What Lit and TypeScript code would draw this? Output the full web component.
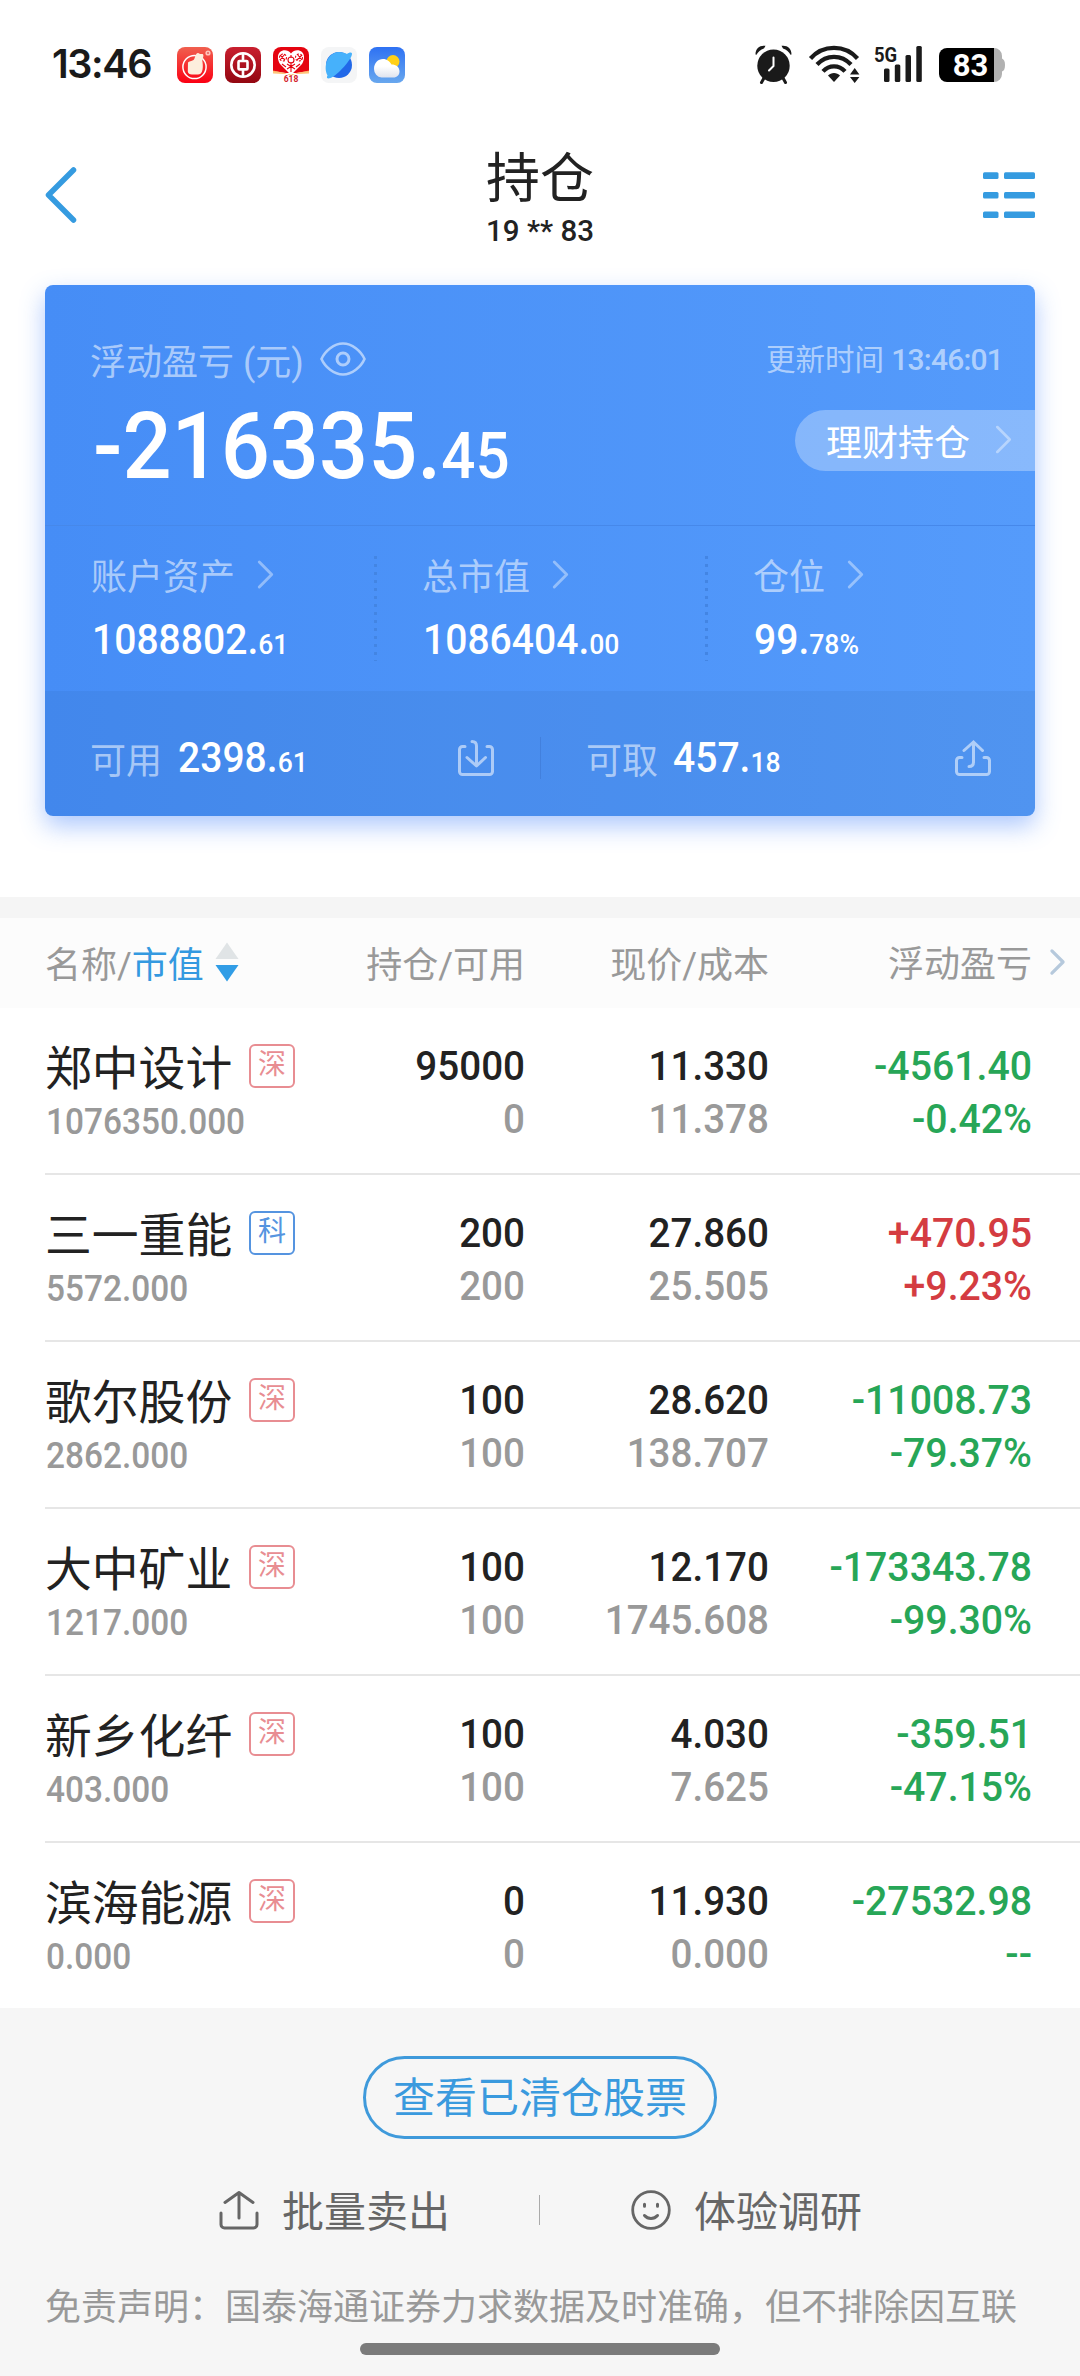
import { LitElement, html, css, svg } from "lit";
import { customElement, property } from "lit/decorators.js";
import { classMap } from "lit/directives/class-map.js";

interface Holding {
  name: string;
  tag: string;
  value: string;
  held: string;
  available: string;
  price: string;
  cost: string;
  profit: string;
  rate: string;
  up?: boolean;
}

const HOLDINGS: Holding[] = [
  { name: "郑中设计", tag: "深", value: "1076350.000", held: "95000", available: "0", price: "11.330", cost: "11.378", profit: "-4561.40", rate: "-0.42%" },
  { name: "三一重能", tag: "科", value: "5572.000", held: "200", available: "200", price: "27.860", cost: "25.505", profit: "+470.95", rate: "+9.23%", up: true },
  { name: "歌尔股份", tag: "深", value: "2862.000", held: "100", available: "100", price: "28.620", cost: "138.707", profit: "-11008.73", rate: "-79.37%" },
  { name: "大中矿业", tag: "深", value: "1217.000", held: "100", available: "100", price: "12.170", cost: "1745.608", profit: "-173343.78", rate: "-99.30%" },
  { name: "新乡化纤", tag: "深", value: "403.000", held: "100", available: "100", price: "4.030", cost: "7.625", profit: "-359.51", rate: "-47.15%" },
  { name: "滨海能源", tag: "深", value: "0.000", held: "0", available: "0", price: "11.930", cost: "0.000", profit: "-27532.98", rate: "--" },
];

const base = css`
  * { box-sizing: border-box; }
  :host { display: block; font-family: Roboto, "Noto Sans CJK SC", sans-serif; }
  svg { display: block; flex: none; overflow: visible; }
  .row { display: flex; align-items: center; }
`;

const chevron = (w: number, h: number, sw: number) => html`
  <svg width=${w} height=${h} viewBox="0 0 16 28" fill="none" stroke="currentColor" stroke-width=${sw} stroke-linecap="round" stroke-linejoin="round">
    <path d="M2 2 14 14 2 26" />
  </svg>`;

@customElement("status-bar")
class StatusBar extends LitElement {
  static styles = [base, css`
    :host { height: 128px; padding: 45px 75px 0 52px; }
    .bar { display: flex; height: 39px; align-items: flex-start; color: #1a1a1a; }
    .time { width: 125px; font: 600 39.500px/39px Inter, sans-serif; letter-spacing: -1.400px; }
    .apps { display: flex; gap: 12px; padding-top: 2px; }
    .grow { flex: 1; }
    .wifi { margin-left: 17px; }
    .signal { position: relative; margin-left: 13px; width: 48px; height: 39px; }
    .net { position: absolute; left: 0; top: -1px; font-size: 21px; line-height: 22px; font-weight: 700; transform: scaleX(.88); transform-origin: left; }
    .battery { position: relative; margin-left: 17px; margin-top: 3px; width: 66px; height: 34px; }
    .level { position: absolute; left: 0; top: 0; width: 63px; text-align: center; font-size: 31px; line-height: 35px; font-weight: 700; color: #fff; }
    text { font-family: Roboto, sans-serif; font-weight: 700; }
  `];

  render() {
    return html`
      <div class="bar">
        <div class="time">13:46</div>
        <div class="apps">
          <svg width="36" height="36" viewBox="0 0 36 36">
            <defs><linearGradient id="a" x2="0" y2="1"><stop offset="0" stop-color="#f0604f" /><stop offset="1" stop-color="#fb0013" /></linearGradient></defs>
            <rect width="36" height="36" rx="8" fill="url(#a)" />
            <circle cx="17.500" cy="20" r="11.600" fill="none" stroke="#fff" stroke-width="1.500" />
            <path d="M11 15.500c1-1.500 3.500-1 5.500-2.500 2-2 1.500-6.500 4.500-7 1.500 0 1.300 1.500 3.500 1 2.500-.5 2 2 1.500 4-.4 1.500-1 2.500-.5 4 .500 3 .500 7-.5 9.500-.7 2-2 3-4 3h-6c-2.500 0-4-1-4.200-3z" fill="#fdeedd" />
            <circle cx="31" cy="6" r="2.600" fill="#ffc4bb" /><circle cx="31" cy="6" r="1" fill="#e5605a" />
          </svg>
          <svg width="36" height="36" viewBox="0 0 36 36">
            <defs><linearGradient id="b" x2="0" y2="1"><stop offset="0" stop-color="#c91f2f" /><stop offset="1" stop-color="#930711" /></linearGradient></defs>
            <rect width="36" height="36" rx="8" fill="url(#b)" />
            <circle cx="18" cy="18" r="11.700" fill="none" stroke="#fff" stroke-width="2.600" />
            <rect x="13.500" y="14" width="9" height="8.400" rx="1" fill="none" stroke="#fff" stroke-width="2.600" />
            <path d="M18 6v8M18 22v8" stroke="#fff" stroke-width="2.600" />
          </svg>
          <svg width="36" height="36" viewBox="0 0 36 36">
            <path d="M8 0h20a8 8 0 0 1 8 8v16L23 26H13L0 24V8a8 8 0 0 1 8-8z" fill="#e50410" />
            <path d="M0 23.500 12 26l6 3 6-3 12-2.500v3L26 27H10L0 26.500z" fill="#ffb65a" opacity=".8" />
            <path d="M18 6.500C15 2.500 10 2.500 7 5c-3 3-2.500 8 0 12l11 11 11-11c2.500-4 3-9 0-12-3-2.500-8-2.500-11 1.500z" fill="#fff" />
            <g stroke="#e50410" stroke-width="1.100" fill="none">
              <path d="M7 8l5 5M12 7l-5 6M24 7l5 6M29 8l-5 5M9 17l4 3M27 17l-4 3M18 8v3M18 15v10M14 22l8-5M14 17l8 5" />
              <circle cx="18" cy="13" r="3" /><circle cx="10" cy="10.500" r="3.500" stroke-dasharray="2 1.500" /><circle cx="26" cy="10.500" r="3.500" stroke-dasharray="2 1.500" />
            </g>
            <text x="18" y="35" text-anchor="middle" font-size="8.500" fill="#d3222b">618</text>
          </svg>
          <svg width="36" height="36" viewBox="0 0 36 36">
            <rect width="36" height="36" rx="8" fill="#f4f5f6" />
            <circle cx="18" cy="18" r="13" fill="#2168e8" />
            <path d="M6.500 28.500C2 20 6 5.500 18 5c4 0 6 1 8 2 2-1.500 4.500-2 5-.5.6 5-15 22.500-21.500 24.500-3 1-4.500 0-3-2.500z" fill="#46b1fb" />
          </svg>
          <svg width="36" height="36" viewBox="0 0 36 36">
            <defs><linearGradient id="w" x2="0" y2="1"><stop offset="0" stop-color="#2e71f3" /><stop offset="1" stop-color="#68a7ee" /></linearGradient>
            <linearGradient id="c" x2="0" y2="1"><stop offset=".4" stop-color="#fff" /><stop offset="1" stop-color="#dfe3ee" /></linearGradient></defs>
            <rect width="36" height="36" rx="8" fill="url(#w)" />
            <circle cx="24" cy="14.500" r="6.500" fill="#ffd019" />
            <path d="M12.500 30.500a8.500 8.500 0 0 1-7.500-8.500c0-6 4-10 9-10 4 0 7 2.500 8.500 5.500 4.500 0 8 2.500 8 7 0 3.500-2.500 6-6 6z" fill="url(#c)" />
          </svg>
        </div>
        <div class="grow"></div>
        <svg width="37" height="39" viewBox="0 0 37 39">
          <circle cx="18.500" cy="20.700" r="16.200" fill="#1a1a1a" />
          <path d="M.5 9.500C.5 3 5 0 10.500.8L9 3.500C5.500 4.500 3 7 1.500 9.800zM36.500 9.500C36.500 3 32 0 26.500.8L28 3.500c3.500 1 6 3.500 7.500 6.300z" fill="#1a1a1a" />
          <path d="M9 33l-2.500 4.500M28 33l2.500 4.500" stroke="#1a1a1a" stroke-width="3" stroke-linecap="round" />
          <path d="M18.500 12.500v8.500l-4.500 4.500" stroke="#fff" stroke-width="2" fill="none" stroke-linecap="round" stroke-linejoin="round" />
        </svg>
        <svg class="wifi" width="52" height="39" viewBox="0 0 52 39">
          <g fill="none" stroke="#1a1a1a" stroke-width="4.200">
            <path d="M1.500 13.500C14-.7 36-.7 48.500 13.500" />
            <path d="M8 19.500c9.500-10.300 24.500-10.300 34 0" />
            <path d="M14 26.300c6-6.600 16-6.600 22 0" />
          </g>
          <path d="M19 30.500c3-3.500 9-3.500 12 0L25 37z" fill="#1a1a1a" />
          <path d="M41 29.500l4.700-6.500 4.700 6.500zM41 32h9.400l-4.700 6z" fill="#1a1a1a" />
        </svg>
        <div class="signal">
          <svg width="48" height="39" viewBox="0 0 48 39" fill="#1a1a1a">
            <rect x="10" y="23.500" width="5.500" height="13.500" rx="1.500" /><rect x="20.800" y="19.500" width="5.500" height="17.500" rx="1.500" /><rect x="31.500" y="10" width="5.500" height="27" rx="1.500" /><rect x="42.300" y="1" width="5.500" height="36" rx="1.500" />
          </svg>
          <span class="net">5G</span>
        </div>
        <div class="battery">
          <svg width="66" height="34" viewBox="0 0 66 34">
            <path d="M50 0h5a8 8 0 0 1 8 8v2.500c2 1 3 2.500 3 6.500s-1 5.500-3 6.500V26a8 8 0 0 1-8 8h-5z" fill="#b1b1b1" />
            <path d="M8 0h47v34H8a8 8 0 0 1-8-8V8a8 8 0 0 1 8-8z" fill="#000" />
          </svg>
          <span class="level">83</span>
        </div>
      </div>`;
  }
}

@customElement("nav-header")
class NavHeader extends LitElement {
  static styles = [base, css`
    :host { height: 157px; padding: 0 45px; }
    .nav { display: grid; grid-template-columns: 52px 1fr 52px; color: #359be0; }
    .side { padding-top: 39px; }
    .list { padding-top: 44px; }
    .mid { text-align: center; color: #222; }
    .title { font-size: 54px; line-height: 60px; margin-top: 22px; }
    .account { font-size: 29.500px; font-weight: 500; line-height: 36px; margin-top: 3px; }
  `];

  render() {
    return html`
      <div class="nav">
        <div class="side">
          <svg width="32" height="56" viewBox="0 0 32 56" fill="none" stroke="currentColor" stroke-width="5.500" stroke-linecap="round" stroke-linejoin="round"><path d="M28.500 3 3.500 28l25 25" /></svg>
        </div>
        <div class="mid">
          <div class="title">持仓</div>
          <div class="account">19 ** 83</div>
        </div>
        <div class="list">
          <svg width="52" height="47" viewBox="0 0 52 47" fill="currentColor">
            ${[0.3, 20, 39.500].map((y) => svg`<rect x="0" y=${y} width="15.500" height="6.600" rx="1.500" /><rect x="21" y=${y} width="31" height="6.600" rx="1.500" />`)}
          </svg>
        </div>
      </div>`;
  }
}

@customElement("money-figure")
class MoneyFigure extends LitElement {
  @property() whole = "";
  @property() cents = "";
  static styles = [base, css`
    :host { display: inline-block; color: #fff; font-weight: 500; font-size: 42px; line-height: 50px; white-space: nowrap; transform: scaleX(.93); transform-origin: left; }
    .cents { font-size: var(--cents, .68em); }
  `];
  render() {
    return html`${this.whole}.<span class="cents">${this.cents}</span>`;
  }
}

@customElement("asset-card")
class AssetCard extends LitElement {
  static styles = [base, css`
    :host { padding: 0 45px; height: 612px; }
    .card { height: 531px; border-radius: 8px; background: linear-gradient(90deg, #468df6, #559bfb); box-shadow: 0 10px 24px rgba(60, 125, 250, .42); color: rgba(255, 255, 255, .55); font-size: 36px; }
    .top { height: 241px; border-bottom: 1px solid #4688ea; display: flex; justify-content: space-between; }
    .left { padding: 49px 0 0 45px; }
    .label { height: 50px; }
    .eye { margin-left: 16px; margin-top: -1px; }
    .total { font-size: 92px; line-height: 108px; margin-top: 9px; margin-left: 3px; display: block; transform: scaleX(.94); --cents: .695em; }
    .right { display: flex; flex-direction: column; align-items: flex-end; padding-top: 52px; }
    .time { font-size: 29.500px; line-height: 46px; padding-right: 32px; }
    .clock { font-weight: 500; letter-spacing: -.8px; font-size: 30px; }
    .pill { margin-top: 27px; width: 240px; height: 61px; border-radius: 31px 0 0 31px; background: rgba(255, 255, 255, .3); color: #fff; padding: 0 0 2px 31px; }
    .pill svg { margin-left: 25px; opacity: .4; }
    .stats { height: 165px; display: grid; grid-template-columns: 331px 331px 328px; }
    .stat { padding: 23px 0 0 46px; position: relative; }
    .stat + .stat::before { content: ""; position: absolute; left: -2px; top: 30px; width: 3px; height: 105px; background: repeating-linear-gradient(#4385e3 0 3px, transparent 3px 8px); }
    .stat svg { margin-left: 22px; color: rgba(255, 255, 255, .4); }
    .stat money-figure { margin: 16px 0 0 1px; }
    .foot { height: 125px; background: rgba(40, 85, 150, .1); border-radius: 0 0 8px 8px; display: grid; grid-template-columns: 495px 1px 1fr; align-items: center; padding-top: 9px; }
    .cash { display: flex; align-items: center; padding: 0 46px 0 45px; }
    .cash money-figure { flex: 1; margin-left: 16px; padding-top: 4px; }
    .sep { height: 42px; background: #4280dd; }
    .cash.out { padding-right: 44px; }
    .cash.out money-figure { margin-left: 15px; }
  `];

  render() {
    return html`
      <div class="card">
        <div class="top">
          <div class="left">
            <div class="row label">浮动盈亏&nbsp;(元)
              <svg class="eye" width="46" height="34" viewBox="0 0 46 34" fill="none" stroke="currentColor" stroke-width="2.600"><path d="M1.500 17C5 9 14 1.500 23 1.500S41 9 44.500 17C41 25 32 32.500 23 32.500S5 25 1.500 17z" /><circle cx="23" cy="17" r="6" stroke-width="3" /></svg>
            </div>
            <money-figure class="total" whole="-216335" cents="45"></money-figure>
          </div>
          <div class="right">
            <div class="time">更新时间 <span class="clock">13:46:01</span></div>
            <div class="row pill">理财持仓 ${chevron(17, 29, 2.600)}</div>
          </div>
        </div>
        <div class="stats">
          ${[["账户资产", "1088802", "61"], ["总市值", "1086404", "00"], ["仓位", "99", "78%"]].map(([label, whole, cents]) => html`
            <div class="stat">
              <div class="row label">${label}${chevron(17, 29, 2.800)}</div>
              <money-figure whole=${whole} cents=${cents}></money-figure>
            </div>`)}
        </div>
        <div class="foot">
          <div class="cash">可用<money-figure whole="2398" cents="61"></money-figure>
            <svg width="36" height="36" viewBox="0 0 36 36" fill="none" stroke="currentColor" stroke-width="3" stroke-linecap="round" stroke-linejoin="round"><path d="M7 6.500H4.500a3 3 0 0 0-3 3v22a3 3 0 0 0 3 3h27a3 3 0 0 0 3-3v-22a3 3 0 0 0-3-3H29" /><path d="M14 1.500c3 0 4.500 1.500 4.500 4.500v19M9 17.500l9.500 8.500 9-8.500" /></svg>
          </div>
          <div class="sep"></div>
          <div class="cash out">可取<money-figure whole="457" cents="18"></money-figure>
            <svg width="36" height="36" viewBox="0 0 36 36" fill="none" stroke="currentColor" stroke-width="3" stroke-linecap="round" stroke-linejoin="round"><path d="M7 17.500H4.500a3 3 0 0 0-3 3v11a3 3 0 0 0 3 3h27a3 3 0 0 0 3-3v-11a3 3 0 0 0-3-3H29" /><path d="M14 26.500c3 0 4.500-1.500 4.500-4.500V2M9 10.500l9.500-8.500 9 8.500" /></svg>
          </div>
        </div>
      </div>`;
  }
}

@customElement("holding-row")
class HoldingRow extends LitElement {
  @property({ attribute: false }) item!: Holding;
  static styles = [base, css`
    :host { padding-left: 45px; height: 167px; }
    :host(:last-of-type) { height: 165px; }
    .line { display: grid; grid-template-columns: 250px 230px 244px 263px; height: 167px; border-bottom: 2px solid #e6e6e6; padding-top: 31px; font-size: 41.500px; line-height: 53px; font-weight: 500; color: #222; text-align: right; }
    :host(:last-of-type) .line { border-bottom: 0; height: 165px; }
    .stock { text-align: left; white-space: nowrap; }
    .name { display: flex; align-items: center; height: 57px; font-size: 46.800px; font-weight: 400; gap: 17px; padding-top: 3px; }
    .tag { width: 48px; height: 44px; border: 2px solid #e88d92; border-radius: 6px; color: #e88d92; font-size: 28px; line-height: 38px; text-align: center; margin-top: -6px; }
    .tag.star { border-color: #5594e0; color: #5594e0; }
    .value { font-size: 36.500px; line-height: 52px; color: #999; margin-left: 1px; transform: scaleX(.915); transform-origin: left; }
    .cell { transform: scaleX(.93); transform-origin: right; }
    .sub { color: #999; }
    .down { color: #27a657; }
    .up { color: #d43c41; }
    .down, .up { transform: scaleX(.945); }
  `];

  render() {
    const h = this.item;
    return html`
      <div class="line">
        <div class="stock">
          <div class="name">${h.name}<span class=${classMap({ tag: true, star: h.tag === "科" })}>${h.tag}</span></div>
          <div class="value">${h.value}</div>
        </div>
        <div class="cell"><div>${h.held}</div><div class="sub">${h.available}</div></div>
        <div class="cell"><div>${h.price}</div><div class="sub">${h.cost}</div></div>
        <div class=${classMap({ cell: true, up: !!h.up, down: !h.up })}><div>${h.profit}</div><div>${h.rate}</div></div>
      </div>`;
  }
}

@customElement("app-root")
class AppRoot extends LitElement {
  static styles = [base, css`
    :host { width: 1080px; height: 2376px; background: #fff; overflow: hidden; }
    .page { display: flex; flex-direction: column; height: 2376px; }
    .band { height: 21px; background: #f5f5f5; }
    .head { display: grid; grid-template-columns: 250px 230px 244px 263px 1fr; height: 90px; padding: 0 0 2px 45px; background: #fcfcfc; color: #999; font-size: 36px; text-align: right; align-items: center; }
    .first { justify-content: flex-start; }
    .active { color: #3499e0; }
    .sort { margin-left: 11px; margin-top: -1px; }
    .pnl { margin-top: -2px; }
    .more { color: #b6c9dc; margin-left: 17px; }
    .bottom { flex: 1; background: #f6f6f6; display: flex; flex-direction: column; align-items: center; padding-top: 48px; color: #666; font-size: 42px; }
    .cleared { width: 354px; height: 83px; border: 3px solid #3f9adb; border-radius: 42px; color: #3a9ade; line-height: 80px; text-align: center; }
    .actions { display: flex; align-items: center; height: 60px; margin-top: 41px; width: 100%; padding-left: 219px; }
    .actions span { margin: -3px 0 0 23px; }
    .bar { width: 1px; height: 30px; background: #aaa; margin: 0 91px 0 89px; }
    .note { align-self: flex-start; padding-left: 45px; font-size: 36px; line-height: 52px; color: #999; margin-top: 42px; white-space: nowrap; }
    .home { width: 360px; height: 12px; border-radius: 6px; background: #7b7b7b; margin-top: 9px; }
  `];

  render() {
    return html`
      <div class="page">
        <status-bar></status-bar>
        <nav-header></nav-header>
        <asset-card></asset-card>
        <div class="band"></div>
        <div class="head">
          <div class="row first">名称/<span class="active">市值</span>
            <svg class="sort" width="24" height="40" viewBox="0 0 24 40"><path d="M12 .5 23.500 17H.5z" fill="#e0e4e6" /><path d="M.5 23h23L12 39.500z" fill="#319de6" /></svg>
          </div>
          <div>持仓/可用</div>
          <div>现价/成本</div>
          <div class="pnl">浮动盈亏</div>
          <div class="more">${chevron(17, 26, 3.500)}</div>
        </div>
        <div>${HOLDINGS.map((h) => html`<holding-row .item=${h}></holding-row>`)}</div>
        <div class="bottom">
          <div class="cleared">查看已清仓股票</div>
          <div class="actions">
            <svg width="40" height="40" viewBox="0 0 40 40" fill="none" stroke="currentColor" stroke-width="3" stroke-linecap="round" stroke-linejoin="round"><path d="M2 23v11.500a3.500 3.500 0 0 0 3.500 3.500h29a3.500 3.500 0 0 0 3.500-3.500V23M20 28V2.500M6 12.500l14-10 14 10" /></svg>
            <span>批量卖出</span>
            <div class="bar"></div>
            <svg width="40" height="40" viewBox="0 0 40 40" fill="none" stroke="currentColor" stroke-width="2.800" stroke-linecap="round"><circle cx="20" cy="20" r="18.300" /><path d="M13.500 14.200v2M26.500 14.200v2M13.500 25.500c3.500 4 9.500 4 13 0" stroke-width="3" /></svg>
            <span>体验调研</span>
          </div>
          <div class="note">免责声明：国泰海通证券力求数据及时准确，但不排除因互联</div>
          <div class="home"></div>
        </div>
      </div>`;
  }
}
